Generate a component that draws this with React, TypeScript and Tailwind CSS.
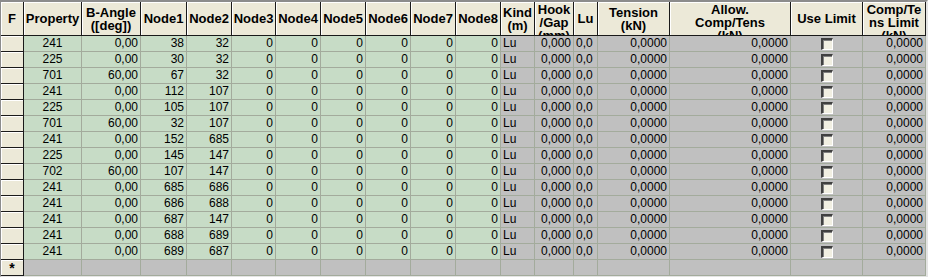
import React from "react";

const cols =
  "grid grid-cols-[23px_58px_59px_46px_45px_44px_45px_45px_45px_45px_45px_34px_39px_24px_72px_121px_72px_63px]";

type Head = { lines: string[]; top?: boolean };

const headers: Head[] = [
  { lines: ["F"] },
  { lines: ["Property"] },
  { lines: ["B-Angle", "([deg])"] },
  { lines: ["Node1"] },
  { lines: ["Node2"] },
  { lines: ["Node3"] },
  { lines: ["Node4"] },
  { lines: ["Node5"] },
  { lines: ["Node6"] },
  { lines: ["Node7"] },
  { lines: ["Node8"] },
  { lines: ["Kind", "(m)"] },
  { lines: ["Hook", "/Gap", "(mm)"], top: true },
  { lines: ["Lu"] },
  { lines: ["Tension", "(kN)"] },
  { lines: ["Allow.", "Comp/Tens", "(kN)"], top: true },
  { lines: ["Use Limit"] },
  { lines: ["Comp/Te", "ns Limit", "(kN)"], top: true },
];

const rows = [
  ["241", "0,00", "38", "32"],
  ["225", "0,00", "30", "32"],
  ["701", "60,00", "67", "32"],
  ["241", "0,00", "112", "107"],
  ["225", "0,00", "105", "107"],
  ["701", "60,00", "32", "107"],
  ["241", "0,00", "152", "685"],
  ["225", "0,00", "145", "147"],
  ["702", "60,00", "107", "147"],
  ["241", "0,00", "685", "686"],
  ["241", "0,00", "686", "688"],
  ["241", "0,00", "687", "147"],
  ["241", "0,00", "688", "689"],
  ["241", "0,00", "689", "687"],
];

const green = "bg-[#c7dcc6] border-r border-b border-[#a3ab9c] px-[2px] leading-[15px] overflow-hidden whitespace-nowrap";
const gray = "bg-[#c0c0c0] border-r border-b border-[#a3ab9c] px-[2px] leading-[15px] overflow-hidden whitespace-nowrap";
const selector = "bg-[#ece9d8] border-r border-b border-r-[#1a1a1a] border-b-[#1a1a1a] shadow-[inset_1px_1px_0_#ffffff]";

function Check() {
  return (
    <div className="flex justify-center items-center h-full">
      <div className="w-[12px] h-[12px] bg-[#f1efe2] border-t-2 border-l-2 border-t-[#404040] border-l-[#404040] border-r border-b border-r-white border-b-white shadow-[inset_1px_1px_0_#808080]" />
    </div>
  );
}

export default function App() {
  return (
    <div
      className="w-[928px] h-[277px] bg-[#c0c0c0] border-t-2 border-l border-t-[#8c8c8c] border-l-[#8c8c8c] border-r-2 border-b border-r-[#e4e4e4] border-b-[#e4e4e4] overflow-hidden text-black text-[12px]"
      style={{ fontFamily: '"Liberation Sans", Arial, sans-serif' }}
    >
      {/* header */}
      <div className={cols + " h-[34px]"}>
        {headers.map((h, i) => (
          <div
            key={i}
            className={
              "bg-[#ece9d8] border-r border-b border-r-[#1a1a1a] border-b-[#1a1a1a] shadow-[inset_1px_1px_0_#ffffff] flex flex-col items-center overflow-hidden font-bold leading-[13px] text-[13px] whitespace-nowrap " +
              (h.top ? "justify-start pt-[1px]" : "justify-center")
            }
          >
            {h.lines.map((l, j) =>
              h.top && j === 2 ? (
                <span key={j} className="block h-[6px] overflow-hidden">{l}</span>
              ) : (
                <span key={j}>{l}</span>
              )
            )}
          </div>
        ))}
      </div>

      {/* data rows */}
      {rows.map((r, i) => (
        <div key={i} className={cols + " h-[16px]"}>
          <div className={selector} />
          <div className={green + " text-center"}>{r[0]}</div>
          <div className={green + " text-right"}>{r[1]}</div>
          <div className={green + " text-right"}>{r[2]}</div>
          <div className={green + " text-right"}>{r[3]}</div>
          {[0, 1, 2, 3, 4, 5].map((k) => (
            <div key={k} className={green + " text-right"}>0</div>
          ))}
          <div className={gray + " text-left"}>Lu</div>
          <div className={gray + " text-right"}>0,000</div>
          <div className={gray + " text-left"}>0,0</div>
          <div className={gray + " text-right"}>0,0000</div>
          <div className={gray + " text-right"}>0,0000</div>
          <div className={gray}>
            <Check />
          </div>
          <div className={gray + " text-right"}>0,0000</div>
        </div>
      ))}

      {/* new row */}
      <div className={cols + " h-[16px]"}>
        <div className={selector + " flex items-center justify-center font-bold text-[14px] leading-[14px]"}>*</div>
        {Array.from({ length: 17 }).map((_, k) => (
          <div key={k} className={gray} />
        ))}
      </div>
    </div>
  );
}
